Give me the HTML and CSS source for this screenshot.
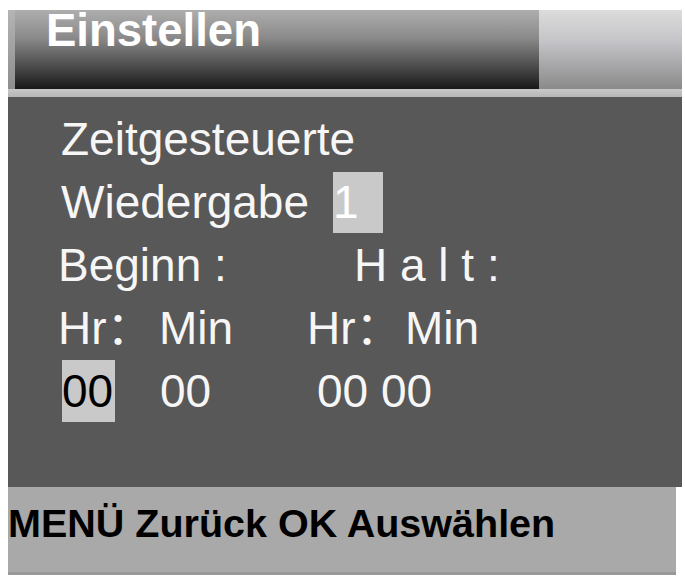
FILE: index.html
```html
<!DOCTYPE html>
<html lang="de">
<head>
<meta charset="utf-8">
<title>Einstellen</title>
<link rel="stylesheet" href="styles.css">
</head>
<body>
<div class="screen">
  <div class="header">
    <div class="title-box">Einstellen</div>
    <div class="header-right"></div>
  </div>
  <div class="strip"></div>
  <div class="panel">
    <div class="row indent">Zeitgesteuerte</div>
    <div class="row indent">
      <span>Wiedergabe</span>
      <span class="sel sel-one">1</span>
    </div>
    <div class="row">
      <span class="c-beginn">Beginn :</span>
      <span>H a l t :</span>
    </div>
    <div class="row">
      <span class="c-hr1">Hr<span class="cjk">：</span></span>
      <span class="c-min1">Min</span>
      <span class="c-hr2">Hr<span class="cjk">：</span></span>
      <span>Min</span>
    </div>
    <div class="row">
      <span class="sel sel-hr">00</span>
      <span class="c-min-val">00</span>
      <span>00 00</span>
    </div>
  </div>
  <div class="footer">MENÜ Zurück OK Auswählen</div>
</div>
</body>
</html>
```
FILE: styles.css
```css
html, body {
  margin: 0;
  padding: 0;
  background: #ffffff;
}

body {
  font-family: "Liberation Sans", Arial, "Noto Sans CJK SC", sans-serif;
}

.screen {
  margin: 10px 0 0 8px;
  width: 674px;
}

.header {
  display: flex;
  height: 79px;
  padding-left: 7px;
  background: linear-gradient(#b4b4b4, #8e8e8e);
}

.title-box {
  width: 493px;
  padding-left: 31px;
  background: linear-gradient(#aeaeae 0%, #8a8a8a 35%, #4e4e4e 70%, #181818 100%);
  color: #ffffff;
  font-weight: bold;
  font-size: 45.5px;
  line-height: 41px;
}

.header-right {
  flex: 1;
  background: linear-gradient(#dcdcdc 0%, #c4c4c8 40%, #a2a2a4 75%, #8a8a8a 100%);
}

.strip {
  height: 8px;
  background: linear-gradient(#c8c8c8, #b6b6b6);
}

.panel {
  height: 379px;
  padding: 11px 0 0 50px;
  background: #585858;
  color: #f6f6f6;
  font-size: 46px;
  line-height: 63px;
}

.row {
  display: flex;
  height: 63px;
  white-space: pre;
}

.indent {
  padding-left: 3px;
}

.cjk {
  font-family: "Noto Sans CJK SC", sans-serif;
  line-height: 0;
}

.sel {
  background: #c9c9c9;
}

.sel-one {
  width: 50px;
  height: 61px;
  margin: 1px 0 0 24px;
  line-height: 61px;
  color: #ffffff;
}

.sel-hr {
  width: 53px;
  height: 62px;
  margin-left: 4px;
  color: #000000;
}

.c-beginn {
  width: 296px;
}

.c-hr1 {
  width: 101px;
}

.c-min1 {
  width: 148px;
}

.c-hr2 {
  width: 98px;
}

.c-min-val {
  width: 157px;
  margin-left: 45px;
}

.footer {
  width: 668px;
  height: 71px;
  padding: 14px 0 0 0;
  background: #a9a9a9;
  border-bottom: 3px solid #989898;
  color: #000000;
  font-weight: bold;
  font-size: 39.5px;
  line-height: 44px;
  white-space: nowrap;
}
```
